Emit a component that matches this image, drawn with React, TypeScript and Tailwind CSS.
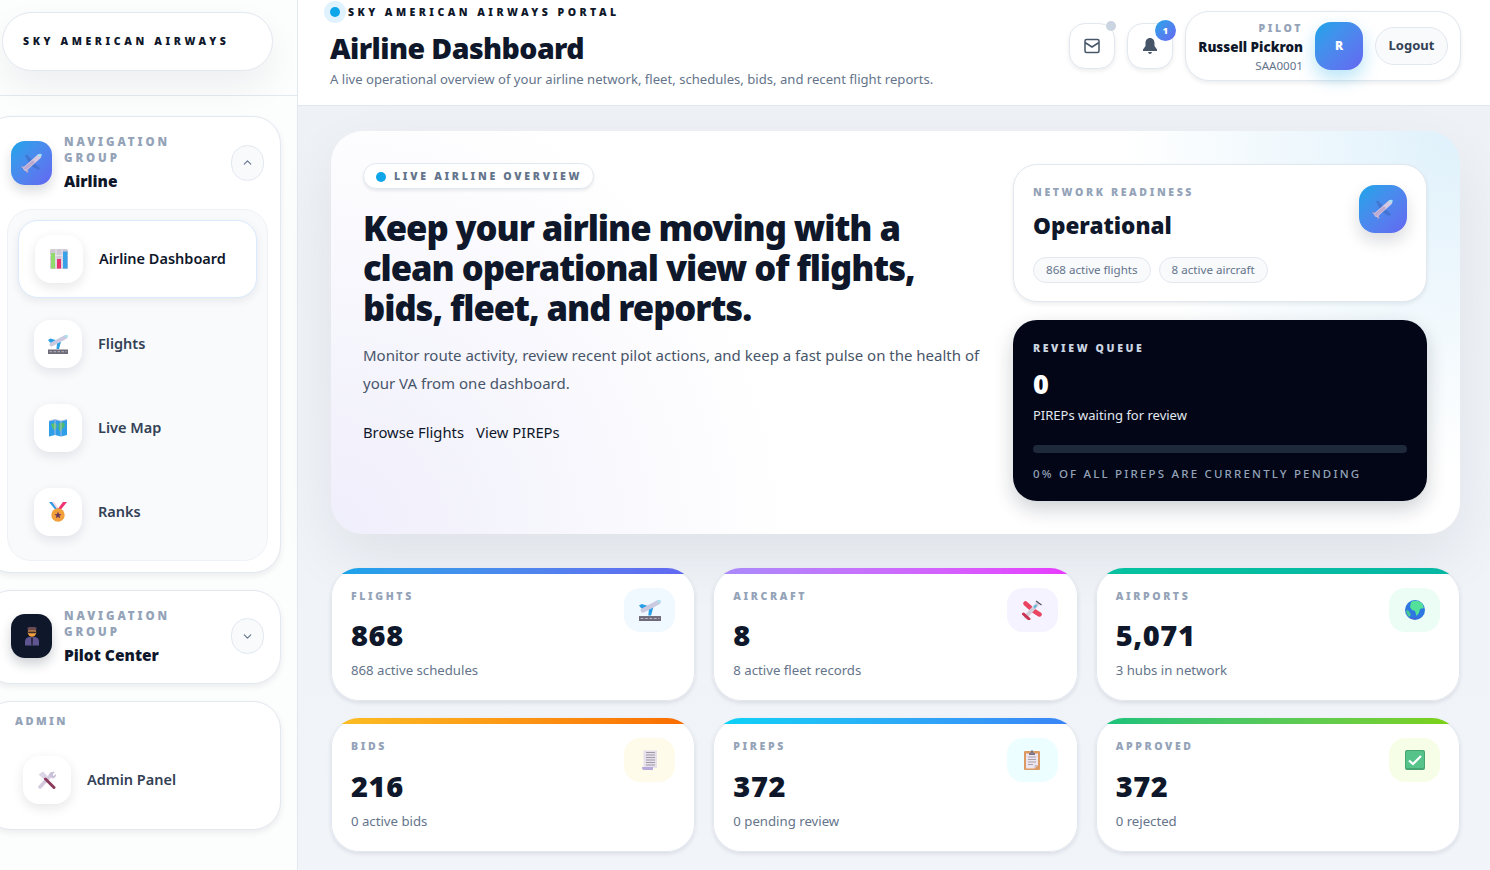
import React from "react";
import { ChevronUp, ChevronDown } from "lucide-react";

const Plane = ({ s = 22 }: { s?: number }) => (
  <svg width={s} height={s} viewBox="0 0 22 22">
    <path d="M11 8 L6 2.500 L4 3.500 L8 11z" fill="#3f6fc9" opacity=".75" />
    <path d="M13 11 L19 16 L17.500 18 L10 14z" fill="#3f6fc9" opacity=".75" />
    <path d="M4 15 L0.500 14 L0.500 15.500 L4 17.500 L6 21 L7.500 20 L6.500 17z" fill="#b7a5c9" />
    <path d="M4.500 16.500 L18 4.500" stroke="#d5c8e0" strokeWidth="4.500" strokeLinecap="round" />
    <path d="M4.500 16.500 L12 10" stroke="#bda9cf" strokeWidth="3" strokeLinecap="round" />
    <path d="M18 3.500 L19.500 3" stroke="#a6e2f2" strokeWidth="2.500" strokeLinecap="round" />
  </svg>
);
const Chart = () => (
  <svg width="18" height="20" viewBox="0 0 18 20">
    <rect width="18" height="20" rx="1.500" fill="#cfc9d6" />
    <path d="M0 6.500H18M0 13H18M6 0V20M12 0V20" stroke="#e7e3ea" strokeWidth="1" />
    <rect x="1" y="4" width="4" height="15.500" fill="#8fdc6a" />
    <rect x="7" y="10" width="4" height="9.500" fill="#e8326f" />
    <rect x="13" y="2.500" width="4.500" height="17" fill="#3aa0e8" />
  </svg>
);
const Departure = ({ s = 20 }: { s?: number }) => (
  <svg width={s} height={s} viewBox="0 0 20 20">
    <path d="M0 6 L2.500 4.500 L9 6.500 L6 10 L2 8.500z" fill="#2b9fe6" />
    <path d="M9 9 L13 7.500 L11 15 L8.500 15z" fill="#2b9fe6" />
    <path d="M3.500 10.500 L17.500 3" stroke="#cbc9df" strokeWidth="4" strokeLinecap="round" />
    <path d="M17.500 2.500 L19 2" stroke="#a6e2f2" strokeWidth="2" strokeLinecap="round" />
    <rect x="0" y="15.500" width="20" height="4.500" fill="#6f6b78" />
    <path d="M1.500 17.700H18.500" stroke="#c8c6cf" strokeWidth=".8" strokeDasharray="2.500 1.500" />
  </svg>
);
const MapIcon = () => (
  <svg width="18" height="18" viewBox="0 0 18 18">
    <path d="M0 2 L6 0.500 L12 2 L18 0.500 V16 L12 17.500 L6 16 L0 17.500z" fill="#2f9ee8" />
    <path d="M2 5 L6 4 L8 7 L6 11 L4 10z" fill="#58c06a" />
    <path d="M10 4 L15 3.500 L16 7 L13 10 L11 13 L9.500 9z" fill="#4fb870" />
    <path d="M6 .500V16M12 2V17.500" stroke="#c7c6e4" strokeWidth=".8" />
    <path d="M0 2 L6 .500 L12 2 L18 .500" stroke="#c5bfe0" strokeWidth=".8" fill="none" />
  </svg>
);
const Medal = () => (
  <svg width="18" height="20" viewBox="0 0 18 20">
    <path d="M0 0 L4 0 L10 8 L6.500 8z" fill="#2e9be6" />
    <path d="M18 0 L14 0 L8 8 L11.500 8z" fill="#f0326e" />
    <path d="M3 0 L5 0 L9 5 L8 7z" fill="#f6d8e4" />
    <circle cx="9" cy="13" r="6.700" fill="#f2a03a" />
    <path d="M9 9.500 L10 12 L12.500 12.200 L10.600 13.800 L11.200 16.300 L9 15 L6.800 16.300 L7.400 13.800 L5.500 12.200 L8 12z" fill="#6d3a5e" />
  </svg>
);
const Pilot = () => (
  <svg width="16" height="20" viewBox="0 0 16 20">
    <path d="M1 19.500 V15 Q1.500 11.500 5 11 H11 Q14.500 11.500 15 15 V19.500z" fill="#5f5590" />
    <path d="M7 11.500 H9 L8.700 19 H7.300z" fill="#2b2540" />
    <circle cx="8" cy="6.500" r="4.200" fill="#f2a03a" />
    <rect x="3.500" y="1" width="9" height="3.500" rx="1.500" fill="#6b4a52" />
    <rect x="4" y="5.500" width="8" height="1.800" rx=".8" fill="#3b2a30" />
  </svg>
);
const Tools = () => (
  <svg width="20" height="18" viewBox="0 0 20 18">
    <path d="M3 16 L14 4" stroke="#d5cbdf" strokeWidth="3.500" strokeLinecap="round" />
    <path d="M12 3 Q14 0 18 1 L15.500 3.500 L16.500 5 L19 3 Q19.500 7 15 7.500z" fill="#c9bfd8" />
    <path d="M1.500 3.500 L6 0.500 L11.500 6 L8 9.500z" fill="#dcd5e5" />
    <path d="M8.500 8 L17 16.500" stroke="#8a3b5c" strokeWidth="3" strokeLinecap="round" />
  </svg>
);
const Small = () => (
  <svg width="20" height="20" viewBox="0 0 20 20">
    <path d="M3.500 3.500 L8 7.500 M12 11 L17.500 14.500" stroke="#ea4560" strokeWidth="4.500" strokeLinecap="round" />
    <path d="M4 16.500 L15 4.500" stroke="#d3cedb" strokeWidth="4" strokeLinecap="round" />
    <path d="M1.500 14 L7 19" stroke="#c93250" strokeWidth="3" strokeLinecap="round" />
    <path d="M14 1 L19.500 5" stroke="#58505f" strokeWidth="1.300" />
    <path d="M11.500 6.500 L14 4.500 L15 6 L12.500 8.500z" fill="#55b8d8" />
  </svg>
);
const Globe = () => (
  <svg width="20" height="20" viewBox="0 0 20 20">
    <circle cx="10" cy="10" r="10" fill="#2c78e0" />
    <path d="M6 2 Q11 -1 17 3 L19 8 L15 9 L14 13 L11.500 16 L10 11 L7 10 L5 7z" fill="#52e09a" />
    <path d="M1 10 L4 11 L6 15 L4 17 Q1 14 1 10z" fill="#48c894" />
    <path d="M3 17 Q10 22 17 16 Q10 20 3 17" fill="#5b55c8" />
  </svg>
);
const Receipt = () => (
  <svg width="16" height="20" viewBox="0 0 16 20">
    <path d="M1.500 0.500 H15 V18 H3 Q1.500 18 1.500 16z" fill="#e5e0ea" />
    <path d="M4 2.500H13M4 5H13M4 7.500H13M4 10H13M4 12.500H13M4 15H13" stroke="#9f99a9" strokeWidth="1" />
    <path d="M0 17 H11 V20 H2 Q0 20 0 18z" fill="#b8a9dc" />
  </svg>
);
const Clipboard = () => (
  <svg width="16" height="20" viewBox="0 0 16 20">
    <rect x="0" y="1" width="16" height="19" rx="1" fill="#dc9a62" />
    <path d="M2 3.500H14V15L10.500 18.500H2z" fill="#ece5ec" />
    <path d="M14 15 L10.500 18.500 V15z" fill="#c9bdc9" />
    <path d="M4 7H12M4 9.500H12M4 12H12M4 14.500H9" stroke="#a79fb0" strokeWidth="1" />
    <path d="M5 3 H6.500 Q7 0 8 0 Q9 0 9.500 3 H11 V5 H5z" fill="#7d7688" />
  </svg>
);
const Check = () => (
  <svg width="20" height="20" viewBox="0 0 20 20">
    <rect width="20" height="20" rx="2" fill="#46a573" />
    <rect x="1" y="1" width="18" height="17" rx="1.500" fill="#56c48a" />
    <path d="M4 10.500 L8 14 L16 6" stroke="#fff" strokeWidth="2.200" fill="none" />
  </svg>
);

const IconBox = ({ children }: { children: React.ReactNode }) => (
  <div className="flex h-12 w-12 shrink-0 items-center justify-center rounded-2xl bg-white shadow-[0_4px_12px_rgba(15,23,42,0.10)]">
    {children}
  </div>
);

const NavItem = ({ icon, label }: { icon: React.ReactNode; label: string }) => (
  <div className="flex h-[84px] items-center gap-4 pl-[27px]">
    <IconBox>{icon}</IconBox>
    <span className="text-[14.500px] font-semibold text-[#334155]">{label}</span>
  </div>
);

const GroupHead = ({ icon, title, dark, open }: { icon: React.ReactNode; title: string; dark?: boolean; open?: boolean }) => (
  <div className="flex items-center pl-[27px] pr-[16px]">
    <div
      className={
        dark
          ? "flex h-11 w-[41px] shrink-0 items-center justify-center rounded-[14px] bg-[#0f172a] shadow-[0_6px_12px_rgba(15,23,42,0.2)]"
          : "flex h-11 w-[41px] shrink-0 items-center justify-center rounded-[14px] bg-gradient-to-br from-[#0ea5e9] to-[#6366f1] shadow-[0_6px_12px_rgba(15,23,42,0.15)]"
      }
    >
      {icon}
    </div>
    <div className="ml-3 flex-1">
      <div className="w-[120px] text-[11.500px] leading-4 font-black tracking-[0.25em] text-[#94a3b8]">NAVIGATION GROUP</div>
      <div className="mt-[5px] text-[15.500px] leading-5 font-black text-[#0f172a]">{title}</div>
    </div>
    <div className="flex h-9 w-[33px] items-center justify-center rounded-full border border-[#e2e8f0] bg-[#f8fafc] text-[#64748b]">
      {open ? <ChevronUp size={13} /> : <ChevronDown size={13} />}
    </div>
  </div>
);

const Stat = ({ accent, label, value, sub, tint, icon, tall }: { accent: string; label: string; value: string; sub: string; tint: string; icon: React.ReactNode; tall?: boolean }) => (
  <div className={`relative overflow-hidden rounded-[28px] bg-white px-[20px] pt-[20px] shadow-[inset_0_0_0_1px_#e2e8f0,0_2px_4px_rgba(15,23,42,0.10)] ${tall ? "h-[134px]" : "h-[133px]"}`}>
    <div className={`absolute top-0 right-0 left-0 h-[6px] ${accent}`} />
    <div className="flex items-start justify-between">
      <div className="pt-[1px]">
        <div className="text-[10.500px] leading-[15px] font-black tracking-[0.25em] text-[#94a3b8]">{label}</div>
        <div className={`text-[29px] leading-[40px] font-black tracking-[0.02em] text-[#0f172a] ${tall ? "mt-[12px]" : "mt-[11px]"}`}>{value}</div>
        <div className="mt-[5px] text-[13.200px] leading-5 text-[#64748b]">{sub}</div>
      </div>
      <div className={`flex h-11 w-[51px] items-center justify-center rounded-2xl ${tint}`}>{icon}</div>
    </div>
  </div>
);

export default function App() {
  return (
    <div className="flex h-[870px] w-[1490px] overflow-hidden bg-white font-['Noto_Sans','Open_Sans',sans-serif]">
      <aside className="h-full w-[298px] shrink-0 overflow-hidden border-r border-[#e2e8f0] bg-[#fcfdfd]">
        <div className="h-[96px] border-b border-[#e2e8f0] pt-3 pl-[2px]">
          <div className="flex h-[59px] w-[271px] items-center rounded-full border border-[#e2e8f0] bg-white pt-[1px] pl-[20px] shadow-[0_16px_36px_rgba(15,23,42,0.06)]">
            <span className="text-[10.500px] font-black tracking-[0.345em] whitespace-nowrap text-[#0f172a]">SKY AMERICAN AIRWAYS</span>
          </div>
        </div>
        <div className="-ml-[17px] flex w-[298px] flex-col gap-[17px] pt-[20px]">
          <section className="h-[457px] rounded-[28px] border border-[#e2e8f0] bg-white pt-[17px] shadow-[0_3px_6px_rgba(15,23,42,0.07)]">
            <GroupHead icon={<Plane s={22} />} title="Airline" open />
            <div className="mt-[18px] mr-[12px] ml-[23px] h-[352px] rounded-3xl border border-[#eef2f7] bg-[#f9fafc] pt-[10px]">
              <div className="mr-[10px] ml-[10px] flex h-[78px] items-center gap-4 rounded-[20px] border border-[#dbeafe] bg-white pl-4 shadow-[0_3px_8px_rgba(15,23,42,0.08)]">
                <IconBox><Chart /></IconBox>
                <span className="text-[14.500px] font-semibold text-[#0f172a]">Airline Dashboard</span>
              </div>
              <div className="mt-[4px] -ml-[1px]">
                <NavItem icon={<Departure />} label="Flights" />
                <NavItem icon={<MapIcon />} label="Live Map" />
                <NavItem icon={<Medal />} label="Ranks" />
              </div>
            </div>
          </section>
          <section className="flex h-[94px] items-center rounded-[28px] border border-[#e2e8f0] bg-white pb-[2px] shadow-[0_3px_6px_rgba(15,23,42,0.07)]">
            <div className="w-full"><GroupHead icon={<Pilot />} title="Pilot Center" dark /></div>
          </section>
          <section className="h-[129px] rounded-[28px] border border-[#e2e8f0] bg-white pt-[12px] pl-[31px] shadow-[0_3px_6px_rgba(15,23,42,0.07)]">
            <div className="text-[11px] leading-[14px] font-black tracking-[0.22em] text-[#94a3b8]">ADMIN</div>
            <div className="mt-[28px] flex items-center gap-4 pl-[8px]">
              <IconBox><Tools /></IconBox>
              <span className="text-[14.500px] font-semibold text-[#334155]">Admin Panel</span>
            </div>
          </section>
        </div>
      </aside>

      <div className="flex h-full min-w-0 flex-1 flex-col">
        <header className="flex h-[106px] shrink-0 items-start justify-between border-b border-[#e2e8f0] bg-white pr-[29px] pl-[32px]">
          <div>
            <div className="relative flex h-[25px] items-center pl-[18px]">
              <span className="absolute top-[1px] -left-[6px] flex h-[22px] w-[22px] items-center justify-center rounded-full bg-[#e0f2fe]">
                <span className="h-[10px] w-[10px] rounded-full bg-[#0ea5e9]" />
              </span>
              <span className="text-[10.500px] font-black tracking-[0.33em] whitespace-nowrap text-[#0f172a]">SKY AMERICAN AIRWAYS PORTAL</span>
            </div>
            <h1 className="mt-[3px] text-[28.500px] leading-[40px] font-black tracking-[-0.02em] text-[#0f172a]">Airline Dashboard</h1>
            <p className="mt-[1px] text-[13.100px] leading-5 text-[#64748b]">A live operational overview of your airline network, fleet, schedules, bids, and recent flight reports.</p>
          </div>
          <div className="mt-[11px] flex items-start gap-3">
            <div className="relative mt-[12px] flex h-[46px] w-[46px] items-center justify-center rounded-2xl border border-[#e2e8f0] bg-white text-[#475569] shadow-[0_2px_4px_rgba(15,23,42,0.08)]">
              <svg width="16" height="16" viewBox="0 0 16 16" fill="none" stroke="currentColor" strokeWidth="1.500"><rect x="1" y="1.500" width="14" height="13" rx="1.500" /><path d="M1 4.500 L8 9 L15 4.500" /></svg>
              <span className="absolute -top-[3px] -right-[2px] h-[10px] w-[10px] rounded-full bg-[#cbd5e1]" />
            </div>
            <div className="relative mt-[12px] flex h-[46px] w-[46px] items-center justify-center rounded-2xl border border-[#e2e8f0] bg-white text-[#475569] shadow-[0_2px_4px_rgba(15,23,42,0.08)]">
              <svg width="14" height="16" viewBox="0 0 14 16" fill="currentColor"><path d="M7 0 C4 0 2.500 2.500 2.500 5 V8 L0 11.500 V13 H14 V11.500 L11.500 8 V5 C11.500 2.500 10 0 7 0z" /><path d="M5 14 H9 Q8.500 16 7 16 Q5.500 16 5 14z" /></svg>
              <span className="absolute -top-[4px] -right-[4px] flex h-[21px] w-[21px] items-center justify-center rounded-full bg-gradient-to-br from-[#0ea5e9] to-[#6366f1] text-[9px] font-black text-white">1</span>
            </div>
            <div className="flex h-[70px] w-[276px] items-center justify-end rounded-3xl border border-[#e2e8f0] bg-white pr-3 shadow-[0_2px_4px_rgba(15,23,42,0.08)]">
              <div className="mt-[2px] text-right">
                <div className="text-[10.500px] leading-[14px] font-black tracking-[0.25em] text-[#94a3b8]">PILOT</div>
                <div className="mt-[2px] text-[13.400px] leading-[20px] font-black whitespace-nowrap text-[#0f172a]">Russell Pickron</div>
                <div className="text-[11.600px] leading-[17px] text-[#64748b]">SAA0001</div>
              </div>
              <div className="ml-3 flex h-12 w-12 items-center justify-center rounded-2xl bg-gradient-to-br from-[#0ea5e9] to-[#6366f1] text-[12px] font-black text-white shadow-[0_8px_18px_rgba(14,165,233,0.3)]">R</div>
              <div className="ml-3 flex h-[38px] w-[73px] items-center justify-center rounded-full border border-[#e2e8f0] bg-[#f8fafc] text-[13px] font-bold text-[#334155]">Logout</div>
            </div>
          </div>
        </header>

        <main className="min-h-0 flex-1 bg-gradient-to-b from-[#eef1f5] to-[#f1f4f9] pt-[25px] pr-[30px] pl-[33px]">
          <section className="flex h-[403px] rounded-[32px] bg-[radial-gradient(circle_at_100%_0%,#dff1fb_0%,rgba(255,255,255,0)_28%),radial-gradient(circle_at_0%_100%,#efeefb_0%,rgba(255,255,255,0)_38%),linear-gradient(#ffffff,#ffffff)] pt-[32px] pr-[33px] pl-[33px] shadow-[0_24px_60px_rgba(15,23,42,0.07)]">
            <div className="-ml-[1px] w-[650px] shrink-0">
              <div className="flex h-[26px] w-[231px] items-center gap-[8px] rounded-full border border-[#e2e8f0] bg-white pt-[1px] pl-[12px] shadow-[0_2px_3px_rgba(15,23,42,0.08)]">
                <span className="h-[10px] w-[10px] rounded-full bg-[#0ea5e9]" />
                <span className="text-[10.500px] font-black tracking-[0.26em] whitespace-nowrap text-[#64748b]">LIVE AIRLINE OVERVIEW</span>
              </div>
              <h2 className="mt-[19px] w-[600px] text-[34.600px] leading-[40px] font-black tracking-[-0.03em] text-[#0f172a]">Keep your airline moving with a clean operational view of flights, bids, fleet, and reports.</h2>
              <p className="mt-[13px] w-[625px] text-[15px] leading-[28px] text-[#475569]">Monitor route activity, review recent pilot actions, and keep a fast pulse on the health of your VA from one dashboard.</p>
              <div className="mt-[23px] flex gap-3 text-[14.800px] leading-6 text-[#0f172a]">
                <span>Browse Flights</span>
                <span>View PIREPs</span>
              </div>
            </div>
            <div className="mt-[1px] flex w-[414px] flex-col gap-[18px]">
              <div className="flex h-[138px] justify-between rounded-3xl border border-[#e2e8f0] bg-white pt-5 pr-[19px] pl-[19px] shadow-[0_2px_4px_rgba(15,23,42,0.08)]">
                <div>
                  <div className="text-[10.500px] leading-[15px] font-black tracking-[0.25em] text-[#94a3b8]">NETWORK READINESS</div>
                  <div className="mt-[10px] text-[22.500px] leading-[32px] font-black text-[#0f172a]">Operational</div>
                  <div className="mt-[15px] flex gap-2">
                    <span className="flex h-[26px] items-center rounded-full border border-[#e2e8f0] bg-[#f8fafc] px-3 text-[11.600px] text-[#64748b]">868 active flights</span>
                    <span className="flex h-[26px] items-center rounded-full border border-[#e2e8f0] bg-[#f8fafc] px-3 text-[11.600px] text-[#64748b]">8 active aircraft</span>
                  </div>
                </div>
                <div className="flex h-12 w-12 items-center justify-center rounded-2xl bg-gradient-to-br from-[#0ea5e9] to-[#6366f1] shadow-[0_8px_16px_rgba(15,23,42,0.15)]"><Plane s={22} /></div>
              </div>
              <div className="h-[181px] rounded-3xl bg-[#020617] px-5 pt-[21px] shadow-[0_8px_20px_rgba(15,23,42,0.2)]">
                <div className="text-[10.500px] leading-[15px] font-black tracking-[0.25em] text-[#cbd5e1]">REVIEW QUEUE</div>
                <div className="mt-[10px] text-[27px] leading-[36px] font-black text-white">0</div>
                <div className="mt-[3px] text-[13px] leading-5 text-[#e2e8f0]">PIREPs waiting for review</div>
                <div className="mt-[20px] h-2 rounded-full bg-[#1e293b]" />
                <div className="mt-[13px] text-[11.500px] leading-4 font-medium tracking-[0.19em] whitespace-nowrap text-[#94a3b8]">0% OF ALL PIREPS ARE CURRENTLY PENDING</div>
              </div>
            </div>
          </section>

          <div className="mt-[34px] grid grid-cols-3 gap-x-[18px] gap-y-[17px]">
            <Stat accent="bg-gradient-to-r from-[#0ea5e9] to-[#6366f1]" label="FLIGHTS" value="868" sub="868 active schedules" tint="bg-[#f0f9ff]" icon={<Departure s={22} />} />
            <Stat accent="bg-gradient-to-r from-[#a78bfa] to-[#e935ff]" label="AIRCRAFT" value="8" sub="8 active fleet records" tint="bg-[#f5f3ff]" icon={<Small />} />
            <Stat accent="bg-gradient-to-r from-[#06c2a0] to-[#06b6a4]" label="AIRPORTS" value="5,071" sub="3 hubs in network" tint="bg-[#ecfdf5]" icon={<Globe />} />
            <Stat tall accent="bg-gradient-to-r from-[#fbbf24] to-[#f96a00]" label="BIDS" value="216" sub="0 active bids" tint="bg-[#fffbeb]" icon={<Receipt />} />
            <Stat tall accent="bg-gradient-to-r from-[#06d3f6] to-[#3b82f6]" label="PIREPS" value="372" sub="0 pending review" tint="bg-[#ecfeff]" icon={<Clipboard />} />
            <Stat tall accent="bg-gradient-to-r from-[#10c27c] to-[#7ed100]" label="APPROVED" value="372" sub="0 rejected" tint="bg-[#f7fee7]" icon={<Check />} />
          </div>
        </main>
      </div>
    </div>
  );
}
